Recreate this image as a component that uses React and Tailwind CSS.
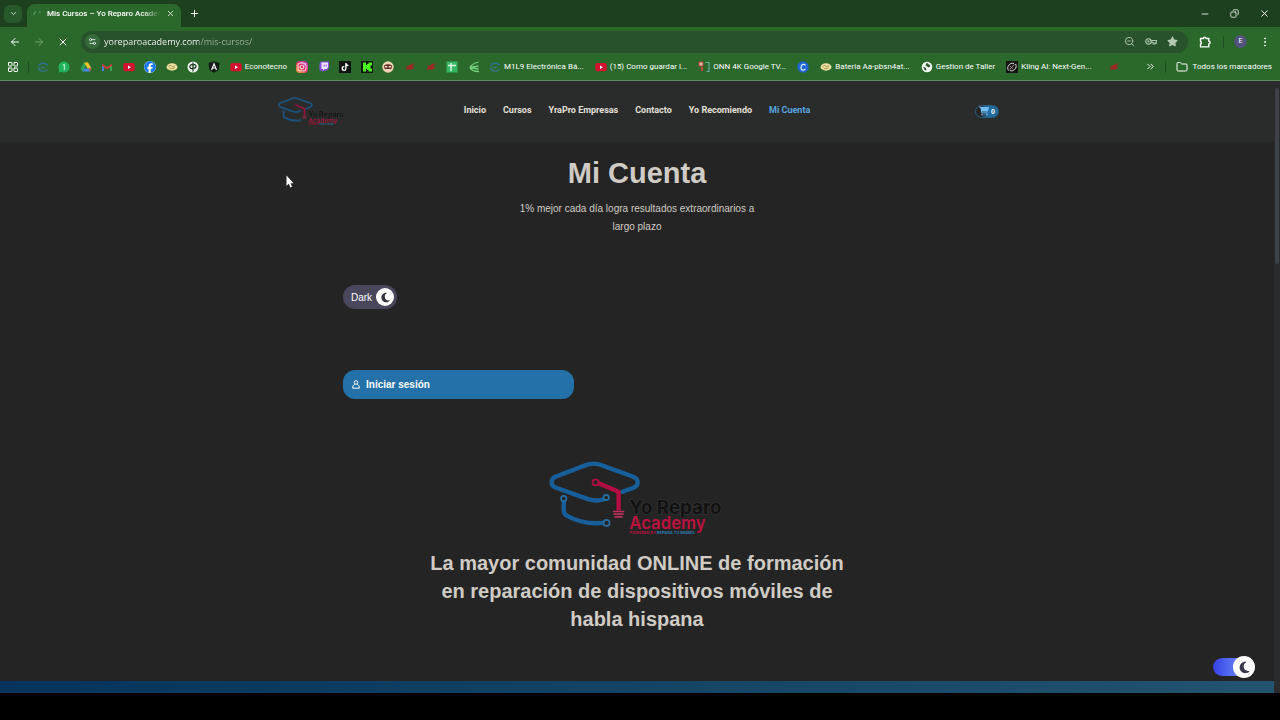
import {
  ArrowLeft,
  ArrowRight,
  ChevronDown,
  ChevronsRight,
  Copy,
  EllipsisVertical,
  Folder,
  LayoutGrid,
  Minus,
  Plus,
  Settings2,
  X,
  ZoomOut,
} from "lucide-react";
import { FaCartShopping, FaFacebook, FaInstagram, FaMoon, FaStar, FaTiktok } from "react-icons/fa6";

const ring = (
  <svg viewBox="0 0 12 12" className="size-3" fill="none" strokeWidth="1.4">
    <path d="M10.500 4.500C9 1.500 3.500 1 2 5" stroke="#2b6f9c" />
    <path d="M1.500 6.500C2.500 11 8.500 11.500 10.500 8M4 6.500h4" stroke="#3a7480" />
  </svg>
);

const youtube = (
  <svg viewBox="0 0 12 12" className="size-3">
    <rect x=".3" y="2" width="11.400" height="8.300" rx="2" fill="#d3122f" />
    <path d="m5 4.500 3 1.700-3 1.700Z" fill="#fff" />
  </svg>
);

const whatsapp = (
  <svg viewBox="0 0 12 12" className="size-3">
    <path d="M6 .5a5.500 5.500 0 1 1-2.700 10.300L.5 11.500l.8-2.700A5.500 5.500 0 0 1 6 .5Z" fill="#20b35c" />
    <path d="m4.800 4.200 1.500-1V9" stroke="#dff5e4" strokeWidth="1" fill="none" />
  </svg>
);

const drive = (
  <svg viewBox="0 0 12 12" className="size-3">
    <path d="M4 1.500 .5 7.500l1.800 3L6 4.800Z" fill="#2fa35a" />
    <path d="M4 1.500h4l3.500 6H7.600Z" fill="#f3c52d" />
    <path d="M4.200 7.500h7.300l-1.800 3H2.300Z" fill="#4687e8" />
    <path d="m9 7.500 2.500 0-1.800 3Z" fill="#dd4b38" />
  </svg>
);

const gmail = (
  <svg viewBox="0 0 12 12" className="size-3">
    <path d="M1 10V3.500l2 1.500v5Z" fill="#4b7fe0" />
    <path d="M9 10V5l2-1.500V10Z" fill="#35a853" />
    <path d="M1 2.500 6 6.200l5-3.700v2.300L6 8.500 1 4.800Z" fill="#d23b3a" />
  </svg>
);

const handshake = (
  <svg viewBox="0 0 12 12" className="size-3">
    <ellipse cx="6" cy="6" rx="5.500" ry="3.700" fill="#ece1a0" />
    <path d="M2.500 5.500 4.500 4.500l2 1 2.500-.5M3.500 7l2 .8 3-1" stroke="#8f8549" strokeWidth=".8" fill="none" />
  </svg>
);

const dp = (
  <svg viewBox="0 0 12 12" className="size-3">
    <circle cx="6" cy="6" r="5.500" fill="#f2f7f2" />
    <path d="M6 1.500v9M6 4C3.500 3 2.500 5 3 6.500S5 8 6 7M6 4c2-1 3.500.2 3 1.700S7.500 7.500 6 7" stroke="#17351b" strokeWidth="1.200" fill="none" />
  </svg>
);

const shield = (
  <svg viewBox="0 0 12 12" className="size-3">
    <path d="M6 .3 11.500 2l-.8 7L6 11.700 1.300 9 .5 2Z" fill="#131a16" />
    <path d="M3.500 9 6 2.800 8.500 9M4.400 7h3.200" stroke="#f4f4f4" strokeWidth="1.200" fill="none" />
  </svg>
);

const twitch = (
  <svg viewBox="0 0 12 12" className="size-3">
    <path d="M3 .5h8v6.500L8.500 9.500h-2L4.500 11.500v-2H1.500V2.500Z" fill="#8a4df0" />
    <path d="M3.500 1.500H10v5L8.500 8h-2L5 9.500V8H3.500Z" fill="#eee6fd" />
    <path d="M6 3.500v2.300M8.300 3.500v2.300" stroke="#8a4df0" />
  </svg>
);

const kick = (
  <svg viewBox="0 0 12 12" className="size-3">
    <rect width="12" height="12" fill="#0d1a0d" />
    <path d="M2 1.500h3v2.500h1V3h1.500V1.500H11v3H9.500V7.500H11v3H7.500V9H6V8H5v2.500H2Z" fill="#4cf51d" />
  </svg>
);

const face = (
  <svg viewBox="0 0 12 12" className="size-3">
    <circle cx="6" cy="6" r="5.700" fill="#f0d3b2" />
    <path d="M2 5.500C2 2.500 10 2.500 10 5.500L9 8.500H3Z" fill="#5f281d" />
    <path d="M3 5h2.300v1.500H3zM6.700 5H9v1.500H6.700zM3.500 8h5v1h-5z" fill="#f5e5d6" />
  </svg>
);

const redMark = (
  <svg viewBox="0 0 12 12" className="size-3">
    <path d="M1.500 9.500 3 5l3.500-1.500 4-1.500-1.500 3 1 2-3.500 2-2.500-.8Z" fill="#962c22" />
  </svg>
);

const sheets = (
  <svg viewBox="0 0 12 12" className="size-3">
    <rect x=".5" y=".5" width="11" height="11" fill="#34b765" />
    <path d="M2 4.500h8M5 2v8" stroke="#d9f5df" strokeWidth="1.500" />
  </svg>
);

const waves = (
  <svg viewBox="0 0 12 12" className="size-3" fill="none" stroke="#75d27d" strokeWidth="1.300">
    <path d="M10.500 1C7 2 3 4 2 6.500M10.500 5 2 6.500l8.500 1.500M2 6.500c1 2.500 5 4 9 4" />
  </svg>
);

const onn = (
  <svg viewBox="0 0 12 12" className="size-3" fill="none">
    <path d="M1 1h4v4H1z" fill="#d4bdb0" stroke="#b64334" />
    <path d="M4 6v4" stroke="#cb4338" strokeWidth="2" />
    <path d="M7.500 1.500H11v9H8.500" stroke="#65aaa0" strokeWidth="1.200" />
  </svg>
);

const canva = (
  <svg viewBox="0 0 12 12" className="size-3">
    <circle cx="6" cy="6" r="5.700" fill="#2265d4" />
    <path d="M8.300 4.500C8 2.500 4 3 4 6.500s3.500 3 4.300 1.300" stroke="#d9f5ff" strokeWidth="1.200" fill="none" />
  </svg>
);

const globe = (
  <svg viewBox="0 0 12 12" className="size-3">
    <circle cx="6" cy="6" r="5.300" fill="#f4f8f4" />
    <path d="M5.500 2c2 0 1 1.500 3 1.500L9.500 5 8 6.500 6 5.500 4.500 4.500ZM2 5.500 5 7l.5 2.500L3.500 9Z" fill="#2a5c2d" />
  </svg>
);

const kling = (
  <svg viewBox="0 0 12 12" className="size-3" fill="none">
    <rect width="12" height="12" fill="#151515" />
    <path d="M2.500 9.500C0 6 4 1 8 2.500M9.500 3C12 7 7 11 4 9.500" stroke="#ddd" />
    <path d="M3.500 8.500 8.500 3.500M4 5l3 3" stroke="#b98e91" />
  </svg>
);

const pinned = [
  { name: "Curso", icon: ring },
  { name: "WhatsApp", icon: whatsapp },
  { name: "Drive", icon: drive },
  { name: "Gmail", icon: gmail },
  { name: "YouTube", icon: youtube },
  { name: "Facebook", icon: <FaFacebook size={12} className="rounded-full bg-white text-[#1877f2]" /> },
  { name: "Ofertas", icon: handshake },
  { name: "DP", icon: dp },
  { name: "Arena", icon: shield },
  { name: "Econotecno", label: "Econotecno", icon: youtube },
  {
    name: "Instagram",
    icon: <FaInstagram size={12} className="rounded-sm bg-linear-to-tr from-[#f7a531] via-[#e52f64] to-[#a935c6] p-px text-white" />,
  },
  { name: "Twitch", icon: twitch },
  { name: "TikTok", icon: <FaTiktok size={12} className="bg-[#101410] p-0.5 text-white" /> },
  { name: "Kick", icon: kick },
  { name: "Chat", icon: face },
  { name: "Taller", icon: redMark },
  { name: "Repuestos", icon: redMark },
  { name: "Sheets", icon: sheets },
  { name: "Waves", icon: waves },
];

const saved = [
  { name: "Electrónica", label: "M1L9 Electrónica Bá...", icon: ring },
  { name: "Como guardar", label: "(15) Como guardar l...", icon: youtube },
  { name: "ONN", label: "ONN 4K Google TV...", icon: onn },
  { name: "Canva", icon: canva },
  { name: "Bateria", label: "Bateria Aa-pbsn4at...", icon: handshake },
  { name: "Gestion", label: "Gestion de Taller", icon: globe },
  { name: "Kling", label: "Kling AI: Next-Gen...", icon: kling },
];

const links = ["Inicio", "Cursos", "YraPro Empresas", "Contacto", "Yo Recomiendo", "Mi Cuenta"];

function Bookmark({ name, label, icon }) {
  return (
    <a href="#" aria-label={name} className="flex items-center gap-[3px] whitespace-nowrap">
      {icon}
      {label}
    </a>
  );
}

function Logo({ className }) {
  return (
    <svg viewBox="57 33 526 224" className={className} role="img" aria-label="Yo Reparo Academy" fill="none">
      <g stroke="#175f9a" strokeWidth="13" strokeLinecap="round" strokeLinejoin="round">
        <path d="M219 148C200 154 190 152 174 147L76 112C61 106 61 87 76 80L165 46Q190 36 215 46L309 80C326 87 326 106 311 112L277 125" />
        <path d="M101 152V181Q101 191 110 196C145 216 180 222 220 218" />
      </g>
      <g stroke="#2671a8" strokeWidth="5" fill="#242424">
        <circle cx="228" cy="142" r="8" />
        <circle cx="101" cy="145" r="8" />
        <circle cx="229" cy="218" r="9" />
      </g>
      <path d="M204 99 265 125V181" stroke="#b40d43" strokeWidth="13" strokeLinejoin="round" />
      <circle cx="196" cy="97" r="9" fill="#242424" stroke="#b40d43" strokeWidth="5" />
      <path d="M248 184h34M250 192h30M253 200h24" stroke="#b93158" strokeWidth="5" />
      <g fontFamily="Inter, sans-serif">
        <text x="297" y="191" fontSize="56" fontWeight="700" fill="#111" stroke="#3a3a3a" strokeWidth="3" paintOrder="stroke">Yo Reparo</text>
        <text x="297" y="235" fontSize="50" fontWeight="600" fill="#bd123f">Academy</text>
        <text x="297" y="252" fontSize="12" fontWeight="700" fill="#b5123f">
          POWERED BY <tspan fill="#2d79ad">REPARA TU MISMO</tspan>
        </text>
      </g>
    </svg>
  );
}

function Browser() {
  return (
    <div className="bg-[#2a692b] font-[Roboto,sans-serif] text-white">
      {/* Tabs */}
      <div className="flex h-[27px] items-center bg-[#1d411e]">
        <button aria-label="Buscar pestañas" className="ml-1 flex size-[18px] items-center justify-center rounded-md bg-[#28592b]">
          <ChevronDown size={9} />
        </button>
        <div className="ml-[5px] flex h-[23px] w-[154px] items-center justify-between self-end rounded-t-lg bg-[#2a692b] px-1.5 pb-1">
          <svg viewBox="0 0 8 8" className="size-2" fill="none" stroke="#5ba774">
            <path d="M1 5V3l2-1.500M6 2h1.500" />
          </svg>
          <span className="w-[113px] mask-r-from-85% text-[8px] font-medium whitespace-nowrap">Mis Cursos – Yo Reparo Academ</span>
          <button aria-label="Cerrar pestaña"><X size={9} /></button>
        </div>
        <button aria-label="Nueva pestaña" className="ml-2"><Plus size={11} /></button>
        <div className="ml-auto flex items-center gap-5 pr-[10px]">
          <button aria-label="Minimizar"><Minus size={10} /></button>
          <button aria-label="Restaurar"><Copy size={9} className="-scale-x-100" /></button>
          <button aria-label="Cerrar"><X size={11} /></button>
        </div>
      </div>

      {/* Toolbar */}
      <div className="flex h-[29px] items-center px-[9px]">
        <button aria-label="Atrás"><ArrowLeft size={12} /></button>
        <button aria-label="Adelante" className="ml-3 text-[#71a16f]"><ArrowRight size={12} /></button>
        <button aria-label="Detener" className="ml-3"><X size={12} /></button>
        <div className="ml-3 flex h-[22px] flex-1 items-center rounded-full bg-[#28522b] pr-2.5 pl-1">
          <Settings2 size={15} className="rounded-full bg-[#376a3a] p-[3px]" />
          <input
            aria-label="Dirección"
            defaultValue="yoreparoacademy.com/mis-cursos/"
            className="ml-1 min-w-0 flex-1 bg-linear-to-r from-white from-[95px] to-[#9db59d] to-[95px] bg-clip-text font-['Open_Sans',sans-serif] text-[9px] font-medium text-transparent outline-none"
          />
          <div className="flex items-center gap-[10px] text-[#b4cbb3]">
            <ZoomOut size={11} />
            <svg viewBox="0 0 14 8" className="w-3" fill="none" stroke="currentColor" strokeWidth="1.300">
              <circle cx="4" cy="4" r="3.200" />
              <circle cx="4" cy="4" r=".6" />
              <path d="M7.200 3h6v3h-1.500v1H9.500V5H7.200" />
            </svg>
            <FaStar size={11} />
          </div>
        </div>
        <button aria-label="Extensiones" className="ml-[11px]">
          <svg viewBox="0 0 12 12" className="size-3" fill="none" stroke="currentColor" strokeWidth="1.400" strokeLinejoin="round">
            <path d="M1.500 2.500h3a1.300 1.300 0 0 1 2.600 0h2.700v2.800a1.300 1.300 0 0 1 0 2.600v3H1.500V8a1.500 1.500 0 0 0 0-2.700Z" />
          </svg>
        </button>
        <span className="ml-3 h-3 w-px bg-[#1c4e20]" />
        <button className="ml-[10px] size-[13px] rounded-full bg-[#51547c] text-[7px] leading-none">E</button>
        <button aria-label="Menú" className="ml-3"><EllipsisVertical size={12} /></button>
      </div>

      {/* Bookmarks */}
      <div className="flex h-[25px] items-center border-b border-[#5f8a5c] pr-2 pb-[3px] pl-[7px] text-[8px]">
        <button aria-label="Aplicaciones"><LayoutGrid size={12} /></button>
        <span className="mr-2 ml-[9px] h-3 w-px bg-[#1c4e20]" />
        <div className="flex w-[443px] items-center justify-between">
          {pinned.map((b) => <Bookmark key={b.name} {...b} />)}
        </div>
        <div className="ml-[9px] flex flex-1 items-center justify-between">
          {saved.map((b) => <Bookmark key={b.name} {...b} />)}
        </div>
        <a href="#" aria-label="Piezas" className="ml-4">{redMark}</a>
        <button aria-label="Más marcadores" className="ml-[25px]"><ChevronsRight size={11} /></button>
        <span className="ml-[9px] h-3 w-px bg-[#1c4e20]" />
        <a href="#" className="ml-[10px] flex items-center gap-[5px] whitespace-nowrap">
          <Folder size={12} />
          Todos los marcadores
        </a>
      </div>
    </div>
  );
}

export default function App() {
  return (
    <div className="relative flex min-h-screen flex-col bg-black">
      <Browser />

      <div className="flex bg-[#242424] font-['Liberation_Sans',sans-serif] text-[#d0ccc5]">
        <div className="min-w-0 flex-1">
          {/* Site nav */}
          <header className="bg-[#2a2c2b]">
            <div className="mx-auto grid h-[61px] max-w-[724px] grid-cols-[1fr_auto_1fr] items-center pb-px">
              <a href="#"><Logo className="ml-[3px] w-[67px] opacity-80" /></a>
              <nav className="flex gap-[17px] font-[Roboto,sans-serif] text-[9px] font-bold text-[#e4e0d9]">
                {links.map((l) => (
                  <a key={l} href="#" className={l === "Mi Cuenta" ? "text-[#5aa5e0]" : ""}>{l}</a>
                ))}
              </nav>
              <button
                aria-label="Carrito"
                className="flex h-[13px] w-6 items-center justify-end gap-0.5 justify-self-end rounded-full border border-[#2b5f80] bg-linear-to-r from-[#242424] from-20% to-[#236b9c] to-50% pr-[3px] text-[7px] leading-none font-bold text-white"
              >
                <FaCartShopping size={10} className="text-[#74bdf2]" />0
              </button>
            </div>
          </header>

          <main className="mx-auto max-w-[588px]">
            <div className="pt-[14px] text-center">
              <h1 className="text-[29px] leading-[34px] font-bold">Mi Cuenta</h1>
              <p className="mx-auto mt-2.5 max-w-[240px] text-[10px] leading-[18px]">
                1% mejor cada día logra resultados extraordinarios a largo plazo
              </p>
            </div>

            <button className="mt-[49px] flex h-6 w-[54px] items-center justify-between rounded-full bg-[#48475c] pr-[3px] pl-2 text-[10px] text-white">
              Dark
              <span className="flex size-[18px] items-center justify-center rounded-full bg-white">
                <FaMoon size={11} className="text-[#34343f]" />
              </span>
            </button>

            <button className="mt-[61px] flex h-[29px] w-[231px] items-center gap-[6px] rounded-xl bg-[#2470a8] px-[9px] text-[10px] font-bold text-white">
              <svg viewBox="0 0 8 9" className="w-2" fill="none" stroke="currentColor">
                <circle cx="4" cy="2.500" r="1.800" />
                <path d="M2.700 4.500C1.200 5 .7 6 .7 8.200h6.600C7.300 6 6.800 5 5.300 4.500" />
              </svg>
              Iniciar sesión
            </button>

            <Logo className="mx-auto mt-[62px] w-[176px]" />
            <h2 className="mx-auto mt-[13px] max-w-[430px] pb-12 text-center text-[20px] leading-[28px] font-bold">
              La mayor comunidad ONLINE de formación en reparación de dispositivos móviles de habla hispana
            </h2>
          </main>

          <footer className="h-3 bg-linear-to-r from-[#05335a] to-[#22536f]" />
        </div>

        {/* Scrollbar */}
        <div className="w-[6px] bg-[#292b2c] pt-[7px]">
          <div className="mx-auto h-[176px] w-1 rounded-full bg-[#3c4248]" />
        </div>
      </div>

      <button
        aria-label="Modo oscuro"
        className="absolute right-[25px] bottom-[42px] flex h-[22px] w-[42px] items-center justify-end rounded-full"
      >
        <span className="h-[18px] flex-1 rounded-l-full bg-linear-to-r from-[#363ee6] to-[#7189f5]" />
        <span className="-ml-2.5 flex size-[22px] items-center justify-center rounded-full bg-white">
          <FaMoon size={13} className="text-[#38364b]" />
        </span>
      </button>

      <svg viewBox="0 0 8 13" className="absolute top-[175px] left-[286px] w-2" aria-hidden="true">
        <path d="M.5.5v10.300l2.300-2.100 1.700 3.800 1.600-.8-1.600-3.500h3Z" fill="#fff" />
      </svg>
    </div>
  );
}
